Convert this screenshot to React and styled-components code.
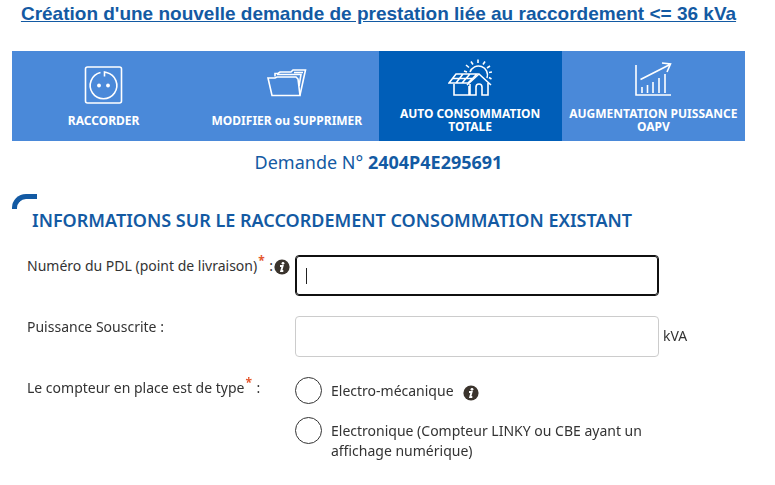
import React, { useState } from 'react';
import styled, { createGlobalStyle } from 'styled-components';

const GlobalStyle = createGlobalStyle`
   *, *::before, *::after {
      box-sizing:border-box;
   }

   body {
      margin:0;
      background-color:#fff;
      color:#333;
      font-family:"Noto Sans", "Open Sans", sans-serif;
      font-size:14px;
      line-height:20px;
   }
`;

const Page = styled.main`
   padding:2px 30px 16px 12px;
`;

const Title = styled.h1`
   margin:0 0 25px;
   padding:0 8px;
   font-family:"Liberation Sans", Arial, sans-serif;
   font-size:19px;
   font-weight:bold;
   line-height:24px;
   white-space:nowrap;
   text-align:center;
   text-decoration:underline;
   color:#135aa3;
`;

const Tabs = styled.nav`
   display:grid;
   grid-template-columns:repeat(4, minmax(0, 1fr));
`;

const Tab = styled.a`
   display:flex;
   flex-direction:column;
   align-items:center;
   justify-content:center;
   gap:10px;
   min-height:90px;
   background-color:${({ $active }) => ($active ? '#005eb8' : '#4a89d9')};
   color:#fff;
   font-size:12px;
   font-weight:700;
   line-height:13px;
   text-align:center;
   text-decoration:none;
`;

const TabIcon = styled.svg`
   width:44px;
   height:38px;
   fill:none;
   stroke:#fff;
   stroke-width:1.6;
`;

const Request = styled.p`
   margin:9px 0 19px;
   font-size:18px;
   line-height:25px;
   text-align:center;
   color:#135aa3;
`;

const SectionHeader = styled.header`
   display:flex;
   align-items:flex-start;
   height:61px;
`;

const Corner = styled.span`
   width:25px;
   height:15px;
   margin-right:-5px;
   border-top:5px solid #135aa3;
   border-left:5px solid #135aa3;
   border-top-left-radius:14px;
`;

const SectionTitle = styled.h2`
   margin:14px 0 0;
   font-size:18px;
   font-weight:600;
   line-height:24px;
   white-space:nowrap;
   color:#135aa3;
`;

const Form = styled.form`
   display:grid;
   gap:20px;
   padding-left:15px;
`;

const Row = styled.div`
   display:grid;
   grid-template-columns:264px minmax(0, 1fr) 82px;
   column-gap:4px;
`;

const LabelCell = styled.div`
   display:flex;
   align-items:flex-start;
   gap:1px;
   padding-top:1px;
   white-space:nowrap;
`;

const Required = styled.sup`
   padding:0 1px;
   font-size:12px;
   font-weight:700;
   line-height:0;
   color:#e4572e;
`;

/* the caret is drawn as a background while the focused field is empty */
const TextInput = styled.input`
   width:100%;
   height:41px;
   padding:0 10px;
   border:1px solid #ccc;
   border-radius:4px;
   background-color:#fff;
   color:#222;
   font:inherit;

   &:focus{
      border-color:#101010;
      outline:1px solid #101010;
      outline-offset:-2px;
   }

   &:focus:placeholder-shown{
      caret-color:transparent;
      background-image:linear-gradient(#222, #222);
      background-position:10px center;
      background-size:1px 16px;
      background-repeat:no-repeat;
   }
`;

const Unit = styled.span`
   padding-top:10px;
`;

const InfoButton = styled.button`
   display:inline-flex;
   margin:0;
   padding:3px 0;
   border:0;
   background:none;
   cursor:help;
`;

const Choices = styled.div`
   display:grid;
   gap:13px;
`;

const Choice = styled.div`
   display:flex;
   align-items:flex-start;
   gap:9px;
`;

const Radio = styled.input`
   flex:none;
   appearance:none;
   width:27px;
   height:27px;
   margin:0;
   border:1px solid #333;
   border-radius:50%;
   background-color:#fff;

   &:checked{
      box-shadow:inset 0 0 0 6px #fff;
      background-color:#005eb8;
   }
`;

const ChoiceLabel = styled.label`
   padding-top:4px;
`;

const ChoiceInfo = styled.span`
   display:flex;
   padding-top:5px;
`;

const InfoIcon = () => (
   <svg width="16" height="16" viewBox="0 0 16 16" aria-hidden="true">
      <circle cx="8" cy="8" r="7.6" fill="#3b342d" />
      <circle cx="9" cy="4.3" r="1.4" fill="#fff" />
      <path d="M6 7H8.6L7.2 12H9.3" fill="none" stroke="#fff" strokeWidth="1.9" />
   </svg>
);

const SocketIcon = () => (
   <TabIcon viewBox="0 0 44 38" aria-hidden="true">
      <rect x="3.5" y="1" width="36" height="36" rx="2" />
      <path d="M18.5 6.5A13.3 13.3 0 1 0 24.5 6.5L22.5 6V10.5" />
      <circle cx="17" cy="19.5" r="1.9" fill="#fff" stroke="none" />
      <circle cx="26" cy="19.5" r="1.9" fill="#fff" stroke="none" />
   </TabIcon>
);

const FolderIcon = () => (
   <TabIcon viewBox="0 0 44 38" aria-hidden="true">
      <path d="M3 12H10L12 11H31L33 13L35 29.5H7Z" />
      <path d="M10 10.5V7.5H13L15 6H26L28 4H40.5L35 29" />
      <path d="M12 8.5H36L34 20M29 6.5H38" />
   </TabIcon>
);

const SolarIcon = () => (
   <TabIcon viewBox="0 0 44 38" aria-hidden="true">
      <path d="M6 25V36H21V27M22 25V36H28V28A3 3 0 0 1 34 28V36H40V24" />
      <path d="M19 26L31 15L43 26" />
      <path d="M8 15H29L20 24H1ZM4.5 19.5H24.5M15 15L8 24M22 15L14 24" />
      <path d="M22 13A9 9 0 1 1 39 19" />
      <path d="M16 12L19 13M18 6L21 8.5M23 2.5L25 5.5M30 0.5V4M37 2.5L35 5.5M42 7L39 9M44 13L41 13.5M43.5 20L41 18.5" />
   </TabIcon>
);

const ChartIcon = () => (
   <TabIcon viewBox="0 0 44 38" aria-hidden="true">
      <path d="M5 6V36H40" />
      <path d="M9.5 20.5L38 6M31 4L39.5 5L36 13" />
      <path d="M11 34V28M16.5 34V26M22 34V23M28 34V19M34 34V15" />
   </TabIcon>
);

const tabs = [
   { label: 'RACCORDER', href: '#raccorder', icon: SocketIcon },
   { label: 'MODIFIER ou SUPPRIMER', href: '#modifier', icon: FolderIcon },
   { label: <>AUTO CONSOMMATION<br />TOTALE</>, href: '#auto', icon: SolarIcon, active: true },
   { label: <>AUGMENTATION PUISSANCE<br />OAPV</>, href: '#oapv', icon: ChartIcon },
];

const App = () => {
   const [meter, setMeter] = useState('');

   return (
      <>
         <GlobalStyle />
         <Page>
            <Title>Création d'une nouvelle demande de prestation liée au raccordement &lt;= 36 kVa</Title>

            <Tabs>
               {tabs.map(({ label, href, icon: Icon, active }) => (
                  <Tab key={href} href={href} $active={active} aria-current={active ? 'page' : undefined}>
                     <Icon />
                     <span>{label}</span>
                  </Tab>
               ))}
            </Tabs>

            <Request>Demande N° <strong>2404P4E295691</strong></Request>

            <SectionHeader>
               <Corner />
               <SectionTitle>INFORMATIONS SUR LE RACCORDEMENT CONSOMMATION EXISTANT</SectionTitle>
            </SectionHeader>

            <Form onSubmit={(e) => e.preventDefault()}>
               <Row>
                  <LabelCell>
                     <label htmlFor="pdl">
                        Numéro du PDL (point de livraison)<Required>*</Required> :
                     </label>
                     <InfoButton type="button" aria-label="Aide sur le numéro du PDL"><InfoIcon /></InfoButton>
                  </LabelCell>
                  <TextInput id="pdl" type="text" placeholder=" " autoFocus />
               </Row>

               <Row>
                  <LabelCell>
                     <label htmlFor="power">Puissance Souscrite :</label>
                  </LabelCell>
                  <TextInput id="power" type="text" placeholder=" " />
                  <Unit>kVA</Unit>
               </Row>

               <Row role="radiogroup" aria-labelledby="meter">
                  <LabelCell>
                     <span id="meter">Le compteur en place est de type<Required>*</Required> :</span>
                  </LabelCell>
                  <Choices>
                     <Choice>
                        <Radio
                           id="mecanique"
                           type="radio"
                           name="meter"
                           checked={meter === 'mecanique'}
                           onChange={() => setMeter('mecanique')}
                        />
                        <ChoiceLabel htmlFor="mecanique">Electro-mécanique</ChoiceLabel>
                        <ChoiceInfo>
                           <InfoButton type="button" aria-label="Aide sur le compteur"><InfoIcon /></InfoButton>
                        </ChoiceInfo>
                     </Choice>
                     <Choice>
                        <Radio
                           id="electronique"
                           type="radio"
                           name="meter"
                           checked={meter === 'electronique'}
                           onChange={() => setMeter('electronique')}
                        />
                        <ChoiceLabel htmlFor="electronique">
                           Electronique (Compteur LINKY ou CBE ayant un affichage numérique)
                        </ChoiceLabel>
                     </Choice>
                  </Choices>
               </Row>
            </Form>
         </Page>
      </>
   );
};

export default App;
